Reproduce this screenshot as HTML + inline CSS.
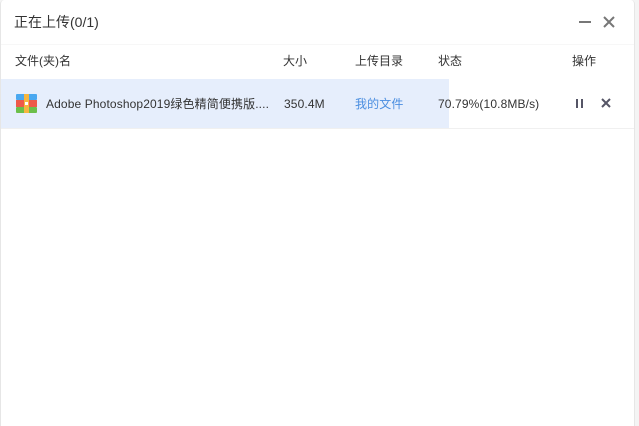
<!DOCTYPE html>
<html><head><meta charset="utf-8"><style>
*{margin:0;padding:0;box-sizing:border-box}
body{width:639px;height:426px;overflow:hidden;background:#f4f4f4;font-family:"Liberation Sans","Noto Sans CJK SC",sans-serif;font-size:12px;color:#333;position:relative}
.win{position:absolute;left:0;top:0;width:635px;height:426px;background:#fff;border-left:1px solid #e6e6e6;border-right:1px solid #e6e6e6;border-radius:4px 4px 0 0}
.t{position:absolute;white-space:nowrap;line-height:16px;height:16px}
.title{left:13px;top:14px;font-size:14px;color:#333}
.hdr{top:53px;color:#333}
.row{position:absolute;left:0;top:79px;width:448px;height:49px;background:#e6eefc}
.line{position:absolute;left:0;top:128px;width:633px;height:1px;background:#f0f0f0}
.line2{position:absolute;left:0;top:44px;width:633px;height:1px;background:#f7f7f7}
.r{top:96px;letter-spacing:0.12px}
</style></head><body>
<div class="win">
<div class="t title">正在上传(0/1)</div>
<div style="position:absolute;left:578px;top:21px;width:12px;height:2px;background:#777"></div>
<svg style="position:absolute;left:602px;top:16px" width="12" height="12"><path d="M1 1L11 11M11 1L1 11" stroke="#777" stroke-width="2"/></svg>
<div class="line2"></div>
<div class="t hdr" style="left:14px">文件(夹)名</div>
<div class="t hdr" style="left:282px">大小</div>
<div class="t hdr" style="left:354px">上传目录</div>
<div class="t hdr" style="left:437px">状态</div>
<div class="t hdr" style="left:571px">操作</div>
<div class="row"></div>
<div class="line"></div>
<svg style="position:absolute;left:15px;top:94px" width="21" height="19">
<rect x="0" y="0" width="21" height="6" fill="#4aa8f0" rx="1"/>
<rect x="0" y="6" width="21" height="7" fill="#ee5a4a"/>
<rect x="0" y="13" width="21" height="6" fill="#6cbf4a" rx="1"/>
<rect x="8" y="0" width="5" height="19" fill="#f6b640"/>
<rect x="9" y="8" width="3" height="3" fill="#fff"/>
</svg>
<div class="t r" style="left:45px">Adobe Photoshop2019绿色精简便携版....</div>
<div class="t r" style="left:283px">350.4M</div>
<div class="t r" style="left:354px;color:#4a8ee0">我的文件</div>
<div class="t r" style="left:437px">70.79%(10.8MB/s)</div>
<div style="position:absolute;left:575px;top:99px;width:2px;height:9px;background:#556"></div>
<div style="position:absolute;left:580px;top:99px;width:2px;height:9px;background:#556"></div>
<svg style="position:absolute;left:600px;top:98px" width="10" height="10"><path d="M1 1L9 9M9 1L1 9" stroke="#556" stroke-width="2"/></svg>
</div>
</body></html>
